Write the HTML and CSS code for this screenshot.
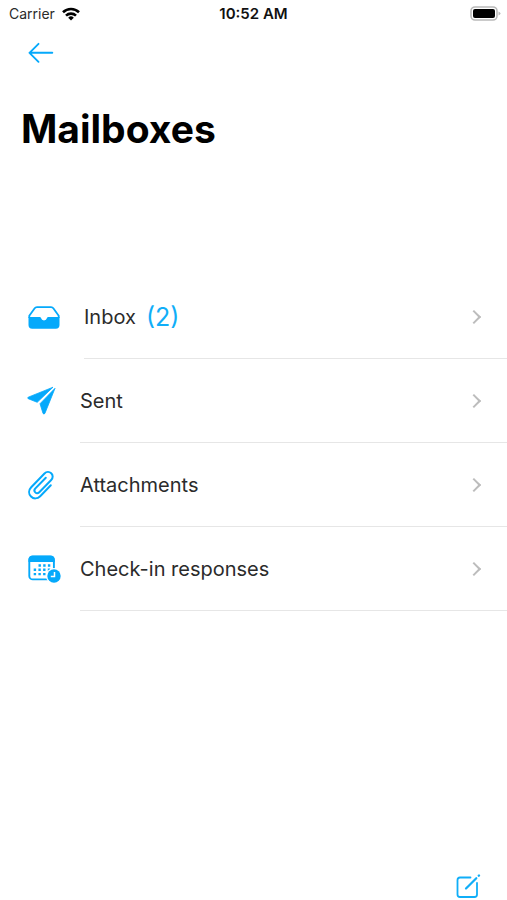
FILE: index.html
```html
<!DOCTYPE html>
<html lang="en">
<head>
    <meta charset="UTF-8">
    <meta name="viewport" content="width=device-width, initial-scale=1.0">
    <title>Mailboxes</title>
    <link rel="stylesheet" href="styles.css">
</head>
<body>
    <div class="status-bar">
        <div class="carrier">
            <span>Carrier</span>
            <svg width="18" height="14" viewBox="0 0 18 14" fill="none" stroke="#000" stroke-width="2.6">
                <path d="M1 5.2a11.6 11.6 0 0 1 16 0"/>
                <path d="M4 8.6a7.2 7.2 0 0 1 10 0"/>
                <path d="M9 13.6l-2.8-2.9a4 4 0 0 1 5.6 0z" fill="#000" stroke="none"/>
            </svg>
        </div>
        <span class="time">10:52 AM</span>
        <svg class="battery" width="31" height="16" viewBox="0 0 31 16">
            <rect x="1" y="1" width="26" height="13" rx="4" fill="#fff" stroke="#b9b9b9" stroke-width="1.6"/>
            <rect x="3" y="3" width="22" height="9" rx="2" fill="#000"/>
            <path d="M28.5 5.5q2 .8 2 2t-2 2z" fill="#b9b9b9"/>
        </svg>
    </div>

    <header>
        <button class="icon-btn" aria-label="Back">
            <svg width="26" height="22" viewBox="0 0 26 22" fill="none" stroke="#05a9fb" stroke-width="1.9" stroke-linecap="round" stroke-linejoin="round">
                <path d="M24.300 10.800H1.500M10.500 1.800L1.500 10.800l9 9"/>
            </svg>
        </button>
        <h1>Mailboxes</h1>
    </header>

    <nav class="mailboxes">
        <a href="#inbox" class="mailbox">
            <span class="icon icon-wide">
                <svg width="34" height="34" viewBox="0 0 34 34">
                    <path d="M2.300 18v-2.200L7.500 8.500Q8.400 7.200 10 7.200h14q1.600 0 2.500 1.300l5.200 7.300V18" fill="none" stroke="#05a9fb" stroke-width="1.800"/>
                    <path d="M1.500 17h11.200q1.100 0 1.300 1.100a3.100 3.100 0 0 0 6 0q.2-1.100 1.300-1.100h11.200v8q0 3.700-3.700 3.700H5.200q-3.700 0-3.700-3.700z" fill="#05a9fb"/>
                </svg>
            </span>
            <span class="label">Inbox <span class="count">(2)</span></span>
        </a>
        <a href="#sent" class="mailbox">
            <span class="icon">
                <svg width="34" height="34" viewBox="0 0 34 34" fill="#05a9fb" stroke="#05a9fb" stroke-width=".8" stroke-linejoin="round">
                    <path d="M26 3.200L1.200 13.200q-1.200.8 0 1.500l9 3.600z"/>
                    <path d="M28 4.300L13 19.700l3 9.700q.9 1.300 1.900 0z"/>
                </svg>
            </span>
            <span class="label">Sent</span>
        </a>
        <a href="#attachments" class="mailbox">
            <span class="icon">
                <svg width="34" height="34" viewBox="0 0 34 34" fill="none" stroke="#05a9fb" stroke-width="2" stroke-linecap="round" stroke-linejoin="round">
                    <path d="M23.800 17.300L13.200 28.200C10.400 31.100 6.500 31 4 28.500s-2.600-6.400.2-9.300L17.500 5.500c2-2 4.800-2 6.700-.2s2 4.700 0 6.700L12.300 24.200c-1.200 1.200-2.900 1.300-4 .2s-1.100-2.800.1-4L18.800 9.800"/>
                </svg>
            </span>
            <span class="label">Attachments</span>
        </a>
        <a href="#check-in" class="mailbox">
            <span class="icon">
                <svg width="34" height="34" viewBox="0 0 34 34">
                    <rect x="2.300" y="4.500" width="24.600" height="22.900" rx="3.500" fill="#fff" stroke="#05a9fb" stroke-width="1.900"/>
                    <path d="M1.500 10V7.700q0-4 4-4h18.200q4 0 4 4V10z" fill="#05a9fb"/>
                    <path d="M11.500 13.500h12M6.700 17.800h16.800M6.700 22.100h13" fill="none" stroke="#05a9fb" stroke-width="2.400" stroke-dasharray="2.400 2.300"/>
                    <circle cx="27" cy="24" r="8" fill="#fff"/>
                    <circle cx="27" cy="24" r="6.700" fill="#05a9fb"/>
                    <path d="M27.500 20v4.500h-3.700" fill="none" stroke="#fff" stroke-width="1.500"/>
                </svg>
            </span>
            <span class="label">Check-in responses</span>
        </a>
    </nav>

    <footer>
        <button class="icon-btn" aria-label="Compose">
            <svg width="26" height="26" viewBox="0 0 26 26" fill="none" stroke="#10aef8" stroke-width="1.800" stroke-linecap="round" stroke-linejoin="round">
                <path d="M15.500 4.500H5Q2.500 4.500 2.500 7v14.500Q2.500 24 5 24h14.500q2.500 0 2.500-2.500V10"/>
                <path d="M11 15.500L21.300 5.200" stroke-width="2.200"/>
                <path d="M23.800 2.700l.2-.2" stroke-width="2.400"/>
            </svg>
        </button>
    </footer>
</body>
</html>
```
FILE: styles.css
```css
* {
    box-sizing: border-box;
}
body {
    margin: 0;
    min-height: 100vh;
    display: flex;
    flex-direction: column;
    font-family: Inter, "Liberation Sans", sans-serif;
    color: #2b2b2b;
    background-color: #fff;
}
svg {
    display: block;
}

/* Status bar */
.status-bar {
    display: grid;
    grid-template-columns: 1fr auto 1fr;
    align-items: center;
    height: 27px;
    padding: 0 6px;
    font-size: 14px;
}
.carrier {
    display: flex;
    align-items: center;
    gap: 7px;
    padding-left: 3px;
}
.time {
    font-size: 15px;
    font-weight: 600;
    color: #111;
}
.battery {
    justify-self: end;
}

/* Title */
header {
    padding: 15px 21px 0;
}
.icon-btn {
    display: block;
    padding: 0;
    border: none;
    background: none;
    cursor: pointer;
}
header .icon-btn {
    margin-left: 7px;
}
h1 {
    margin: 40px 0 0;
    font-size: 39px;
    line-height: 50px;
    font-weight: 700;
    color: #000;
}

/* Mailbox list */
.mailboxes {
    margin-top: 121px;
}
.mailbox {
    display: flex;
    height: 84px;
    padding-left: 27px;
    font-size: 20px;
    color: inherit;
    text-decoration: none;
}
.icon {
    display: flex;
    align-items: center;
    width: 53px;
}
.icon-wide {
    width: 57px;
}
.label {
    flex: 1;
    display: flex;
    align-items: center;
    gap: 10px;
    padding-right: 28px;
    border-bottom: 1px solid #e6e6e6;
}
/* Chevron at the end of the row */
.label::after {
    content: "";
    width: 8px;
    height: 8px;
    margin-left: auto;
    border-top: 2px solid #bcbcbc;
    border-right: 2px solid #bcbcbc;
    transform: rotate(45deg);
}
.count {
    font-size: 25px;
    color: #10aef8;
}

/* Compose */
footer {
    display: flex;
    justify-content: flex-end;
    margin-top: auto;
    padding: 0 26px 1px;
}
```
